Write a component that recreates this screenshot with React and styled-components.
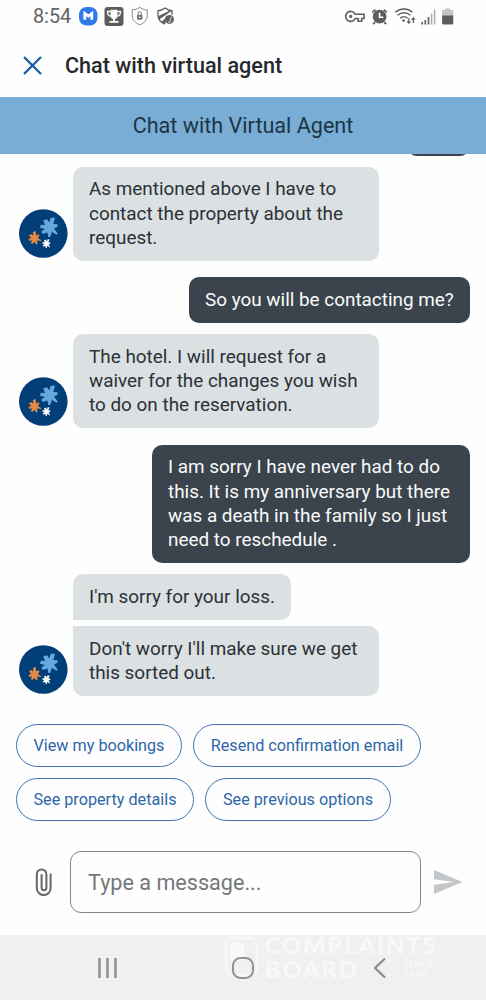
import React from 'react';
import styled, { createGlobalStyle } from 'styled-components';

const GlobalStyle = createGlobalStyle`
  * {
    box-sizing: border-box;
  }

  body {
    margin: 0;
    background: #fefefe;
    font-family: Roboto, sans-serif;
  }
`;

const Screen = styled.div`
  display: flex;
  flex-direction: column;
  width: 486px;
  height: 1000px;
  overflow: hidden;
  background: #fefefe;
`;

const StatusBar = styled.div`
  display: flex;
  justify-content: space-between;
  height: 33px;
  padding: 0 32px 0 33px;
  color: #636363;
`;

const Clock = styled.span`
  width: 46px;
  padding-top: 1px;
  font-size: 19.8px;
  line-height: 34px;
`;

const StatusGroup = styled.div`
  display: flex;
  align-items: center;
`;

const Header = styled.header`
  display: flex;
  align-items: center;
  gap: 23px;
  height: 64px;
  padding: 0 23px;
`;

const Title = styled.h1`
  margin: 0;
  padding-top: 1px;
  font-size: 21.6px;
  font-weight: 500;
  color: #26292c;
`;

const Banner = styled.div`
  flex: none;
  height: 57px;
  background: #79add5;
  color: #1d3445;
  font-size: 21.6px;
  line-height: 58px;
  text-align: center;
`;

const Thread = styled.main`
  flex: none;
  display: flex;
  flex-direction: column;
  height: 570px;
  padding: 0 16px 0 19px;
  overflow: hidden;
`;

const ScrolledBubble = styled.div`
  flex: none;
  align-self: flex-end;
  width: 63px;
  height: 12px;
  margin-top: -10.5px;
  border-radius: 0 0 10px 10px;
  background: #3b444c;
`;

const Row = styled.div`
  display: flex;
  align-items: flex-end;
  gap: 5px;
  justify-content: ${({ $mine }) => ($mine ? 'flex-end' : 'flex-start')};
  margin-top: ${({ $top }) => $top}px;
`;

const Stack = styled.div`
  display: flex;
  flex-direction: column;
  align-items: flex-start;
  gap: 6px;
`;

const Bubble = styled.div`
  width: ${({ $width }) => $width}px;
  padding: 10.8px 0 10.9px 16px;
  border-radius: ${({ $radius }) => $radius || '10px'};
  background: ${({ $mine }) => ($mine ? '#3b444c' : '#dbe0e3')};
  color: ${({ $mine }) => ($mine ? '#f8fafb' : '#2b3136')};
  font-size: 18.9px;
  line-height: 24.2px;
  white-space: pre;
`;

const Avatar = styled.div`
  width: 49px;
  height: 49px;
  margin-bottom: 2.5px;
`;

const Chips = styled.div`
  display: flex;
  flex-wrap: wrap;
  gap: 11px;
  padding: 0 16px;
`;

const Chip = styled.button`
  width: ${({ $width }) => $width}px;
  height: 43px;
  padding: 0;
  border: 1px solid #3d72ae;
  border-radius: 22px;
  background: transparent;
  color: #2d66a8;
  font-family: inherit;
  font-size: 16.2px;
  line-height: 42px;
  white-space: nowrap;
`;

const Composer = styled.div`
  display: flex;
  align-items: center;
  height: 62px;
  margin-top: 30px;
  padding: 0 23px 0 35px;
`;

const Input = styled.input`
  width: 351px;
  height: 62px;
  margin: 0 13px 0 18px;
  padding: 0 17px;
  border: 1px solid #858889;
  border-radius: 11px;
  background: transparent;
  font-family: inherit;
  font-size: 21.6px;

  &::placeholder {
    color: #75787a;
    opacity: 1;
  }
`;

const NavBar = styled.nav`
  position: relative;
  display: flex;
  justify-content: space-between;
  align-items: center;
  height: 65px;
  margin-top: auto;
  padding: 0 99px 0 96px;
  background: #f0f0f0;
`;

const NavIcon = styled.svg`
  position: relative;
  margin-right: ${({ $gap }) => $gap || 0}px;
`;

const Watermark = styled.div`
  position: absolute;
  left: 224px;
  top: -2px;
  display: flex;
  gap: 6px;
  color: #f8f8f8;
  font-family: Lato, sans-serif;
`;

const WatermarkText = styled.div`
  font-size: 23.5px;
  font-weight: 900;
  line-height: 24px;
  letter-spacing: 2px;
`;

const WatermarkLine = styled.div`
  display: flex;
  justify-content: space-between;
  align-items: center;
  width: 173px;
`;

const WatermarkNote = styled.div`
  width: 34px;
  font-size: 8px;
  line-height: 10px;
  letter-spacing: 1.4px;
`;

const star = 'M1.7 -9.5H6L4.3 -3.2L8.5 -3V-.4L5 1.4L9 6.8L7 7.4L3 4.6L1.2 9.8H-.7L-1.6 5.2L-6.3 6.8L-7.6 4.4L-4 1.8L-9 .5L-8.2 -2.4L-4 -2.2L-5.8 -7L-2 -8L.2 -4.6Z';

const BrandAvatar = () => (
  <Avatar>
    <svg width="49" height="49" viewBox="0 0 49 49">
      <circle cx="24.3" cy="24.5" r="24.3" fill="#023f78" />
      <path d={star} fill="#65a8dc" transform="translate(30 18.2)" />
      <path d={star} fill="#e58a43" transform="translate(15.3 29.3) rotate(-22) scale(.66)" />
      <path d={star} fill="#fff" transform="translate(27.4 34.6) rotate(6) scale(.46)" />
    </svg>
  </Avatar>
);

const LeftStatusIcons = () => (
  <svg width="100" height="33" viewBox="79 0 100 33">
    <rect x="79" y="7" width="18.5" height="18.5" rx="7.5" fill="#2e7be8" />
    <path d="M84.8 19.8v-6.3l3.5 2.6 3.5-2.6v6.3" fill="none" stroke="#fff" strokeWidth="2.8" />
    <rect x="104.5" y="7" width="19" height="19" rx="3" fill="#5d5d5d" />
    <path d="M110.5 9.8h7v5.2c0 2.8-1.4 4.2-3.5 4.2s-3.5-1.4-3.5-4.2zM113 18.5h2v2.5h3.5v1.8h-9V21h3.5z" fill="#fff" />
    <path d="M110.5 11.5h-3c0 3 1 4.6 3.6 4.6M117.5 11.5h3c0 3-1 4.6-3.6 4.6" fill="none" stroke="#fff" strokeWidth="1.3" />
    <path d="M139.7 7.3c2.5 2 5 2.5 7.5 2.6v5.8c0 4.3-3.2 7.3-7.5 9.2-4.3-1.9-7.5-4.9-7.5-9.2V9.9c2.5-.1 5-.6 7.5-2.6z" fill="none" stroke="#888" strokeWidth="1" />
    <rect x="137" y="14.8" width="5.4" height="5" rx="1" fill="#777" />
    <path d="M138.1 14.8v-1.6a1.6 1.6 0 0 1 3.2 0v1.6" fill="none" stroke="#777" />
    <circle cx="139.7" cy="17.2" r=".8" fill="#fff" />
    <path d="M172 15v-4.3c-2.4-.1-4.7-.9-7-2.7-2.3 1.8-4.6 2.6-7 2.7v4.7c0 4.2 3 7 7 8.8" fill="none" stroke="#5d5d5d" strokeWidth="1.3" />
    <path d="M158 16.2l12-5.7 1.5.5-12.4 8.6zM161.4 22.2l3.4-3.8.8 5.4z" fill="#5d5d5d" />
    <circle cx="169.4" cy="19.4" r="4.5" fill="#5d5d5d" />
    <path d="M168.3 21.2a1.2 1.2 0 1 0 1.6-1l1.6-3.4" fill="none" stroke="#ddd" strokeWidth="1" />
  </svg>
);

const RightStatusIcons = () => (
  <svg width="110" height="33" viewBox="344 0 110 33">
    <g fill="none" stroke="#5d5d5d" strokeWidth="1.6">
      <path d="M355.2 14.3a5 5 0 1 0 0 4.2h2.9v2.8h3.6v-2.8h2.4v-4.2z" />
      <path d="M372.3 12.4l3.2-2.8M386.9 12.4l-3.2-2.8M375 22.2l-1.8 2M384.3 22.2l1.8 2" strokeWidth="1.8" />
      <path d="M395.3 12.3c5-4.4 12.2-4.4 17.2 0M397.6 15.2c3.8-3.2 9-3.2 12.8 0M400 18.2c2.4-2 5.6-2 7.6 0" strokeWidth="1.4" />
    </g>
    <circle cx="350.7" cy="16.4" r="1.6" fill="#5d5d5d" />
    <circle cx="379.6" cy="16.6" r="6.9" fill="#5d5d5d" />
    <path d="M379.6 12.8v4.4h3.8" fill="none" stroke="#fff" strokeWidth="1.6" />
    <circle cx="403.6" cy="20.5" r="1.3" fill="#5d5d5d" />
    <path d="M408.8 18v5M407.2 21.4l1.6 1.8 1.6-1.8M413.3 23v-5M411.7 19.8l1.6-1.8 1.6 1.8" fill="none" stroke="#5d5d5d" strokeWidth="1.2" />
    <path d="M422.2 22v2.5M425.3 20v4.5M428.5 17v7.5" stroke="#5d5d5d" strokeWidth="1.6" />
    <path d="M431.6 13.5v11M434.6 9.5v15" stroke="#aaa" strokeWidth="1.5" />
    <path d="M445 8.5h5V10h3.3v6h-11.2v-6h2.9z" fill="#c4c4c4" />
    <path d="M442.1 15.5h11.2v7.5q0 1.6-1.6 1.6h-8q-1.6 0-1.6-1.6z" fill="#5d5d5d" />
  </svg>
);

const messages = [
  { top: 11, width: 306, text: 'As mentioned above I have to\ncontact the property about the\nrequest.' },
  { top: 16.2, width: 281, mine: true, text: 'So you will be contacting me?' },
  { top: 11, width: 306, text: 'The hotel. I will request for a\nwaiver for the changes you wish\nto do on the reservation.' },
  {
    top: 16.5,
    width: 318,
    mine: true,
    text: 'I am sorry I have never had to do\nthis. It is my anniversary but there\nwas a death in the family so I just\nneed to reschedule .',
  },
];

const chips = [
  ['View my bookings', 166],
  ['Resend confirmation email', 228],
  ['See property details', 178],
  ['See previous options', 186],
];

const App = () => {
  return (
    <Screen>
      <GlobalStyle />
      <StatusBar>
        <StatusGroup>
          <Clock>8:54</Clock>
          <LeftStatusIcons />
        </StatusGroup>
        <StatusGroup>
          <RightStatusIcons />
        </StatusGroup>
      </StatusBar>

      <Header>
        <svg width="19" height="19" viewBox="0 0 19 19">
          <path d="M1 1l17 17M18 1L1 18" stroke="#1c5f9f" strokeWidth="2.4" />
        </svg>
        <Title>Chat with virtual agent</Title>
      </Header>

      <Banner>Chat with Virtual Agent</Banner>

      <Thread>
        <ScrolledBubble />
        {messages.map(({ text, top, width, mine }) => (
          <Row key={text} $mine={mine} $top={top}>
            {!mine && <BrandAvatar />}
            <Bubble $mine={mine} $width={width}>{text}</Bubble>
          </Row>
        ))}
        <Row $top={11}>
          <BrandAvatar />
          <Stack>
            <Bubble $width={218} $radius="10px 10px 10px 0">I'm sorry for your loss.</Bubble>
            <Bubble $width={306} $radius="0 10px 10px 10px">{"Don't worry I'll make sure we get\nthis sorted out."}</Bubble>
          </Stack>
        </Row>
      </Thread>

      <Chips>
        {chips.map(([label, width]) => (
          <Chip key={label} $width={width}>{label}</Chip>
        ))}
      </Chips>

      <Composer>
        <svg width="17" height="28" viewBox="0 0 17 28">
          <path
            d="M15.6 5.6v14.6a6.9 6.9 0 0 1-13.8 0V6.2a4.8 4.8 0 0 1 9.6 0v13.6a2.4 2.4 0 0 1-4.8 0V6.2"
            fill="none"
            stroke="#65686a"
            strokeWidth="2"
          />
        </svg>
        <Input placeholder="Type a message..." />
        <svg width="29" height="24" viewBox="0 0 29 24">
          <path d="M0 0l28.5 12L0 24v-9.3L20 12 0 9.3z" fill="#c4c7c9" />
        </svg>
      </Composer>

      <NavBar>
        <Watermark>
          <svg width="35" height="46" viewBox="0 0 35 46">
            <rect x="2" y="5" width="31" height="37" rx="7" fill="none" stroke="#f7f7f7" strokeWidth="2.5" />
            <rect x="6" y="9" width="14" height="19" rx="5" fill="#f9f9f9" />
          </svg>
          <WatermarkText>
            <div>COMPLAINTS</div>
            <WatermarkLine>
              BOARD
              <WatermarkNote>SINCE 2004</WatermarkNote>
            </WatermarkLine>
          </WatermarkText>
        </Watermark>
        <NavIcon width="24" height="22" viewBox="0 0 24 22">
          <path d="M3.5 1v20M11.5 1v20M19.5 1v20" stroke="#8c8c8c" strokeWidth="2.4" />
        </NavIcon>
        <NavIcon $gap={7} width="24" height="24" viewBox="0 0 24 24">
          <rect x="2" y="2" width="20" height="20" rx="7.5" fill="none" stroke="#929292" strokeWidth="2" />
        </NavIcon>
        <NavIcon width="14" height="22" viewBox="0 0 14 22">
          <path d="M12 1.5L2 11l10 9.5" fill="none" stroke="#8c8c8c" strokeWidth="2.2" />
        </NavIcon>
      </NavBar>
    </Screen>
  );
};

export default App;
